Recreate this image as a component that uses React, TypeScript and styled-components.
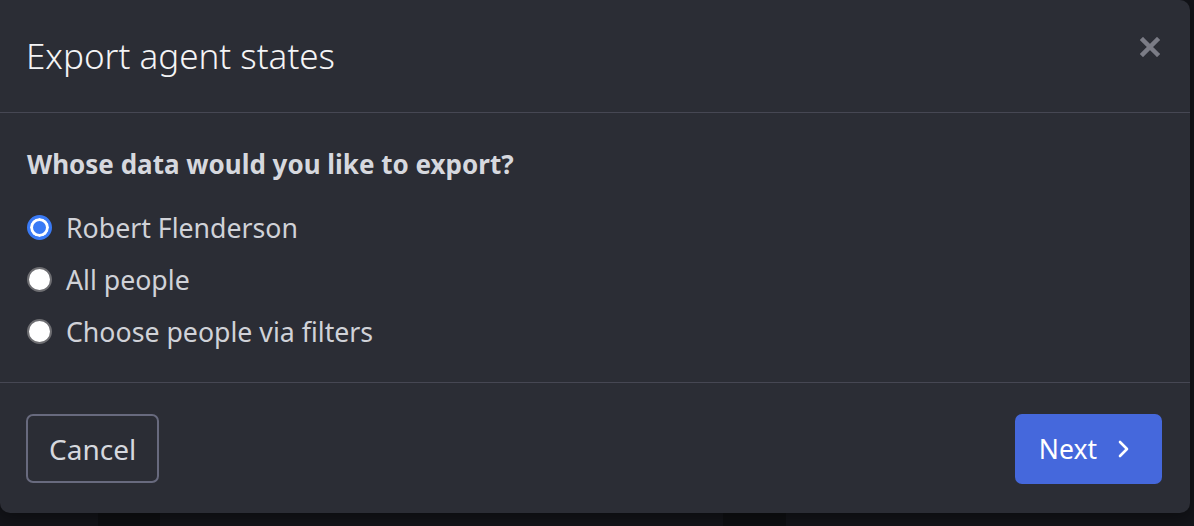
import React, { useState } from "react";
import styled, { createGlobalStyle } from "styled-components";

const GlobalStyle = createGlobalStyle`
  html, body {
    margin: 0;
    padding: 0;
    background: #131419;
    font-family: "Noto Sans", "Liberation Sans", sans-serif;
  }
  * {
    box-sizing: border-box;
  }
`;

const Page = styled.div`
  position: relative;
  width: 1194px;
  height: 526px;
  overflow: hidden;
  background: #131419;
  display: flex;
`;

const PageColumn = styled.div<{ $width: number; $dark?: boolean }>`
  width: ${(p) => p.$width}px;
  flex-shrink: 0;
  height: 100%;
  background: ${(p) => (p.$dark ? "#0e0f12" : "#131419")};
`;

const Modal = styled.div`
  position: absolute;
  top: 0;
  left: 0;
  width: 1190px;
  height: 513px;
  background: #2b2d35;
  border-radius: 0 10px 10px 10px;
  display: flex;
  flex-direction: column;
  box-shadow: 0 4px 16px rgba(0, 0, 0, 0.4);
`;

const Header = styled.div`
  height: 113px;
  display: flex;
  align-items: center;
  justify-content: space-between;
  padding: 0 30px 0 26px;
  border-bottom: 1px solid #464753;
`;

const Title = styled.h2`
  margin: 0 0 2px;
  font-size: 35px;
  font-weight: 300;
  color: #f4f4f6;
`;

const CloseButton = styled.button`
  align-self: flex-start;
  margin-top: 37px;
  width: 20px;
  height: 20px;
  padding: 0;
  border: none;
  background: none;
  cursor: pointer;
  display: flex;
`;

const Body = styled.div`
  padding: 33px 27px 25px;
  border-bottom: 1px solid #464753;
`;

const Question = styled.div`
  font-size: 26px;
  line-height: 36px;
  font-weight: 700;
  color: #d6d8de;
  margin-bottom: 19px;
`;

const RadioRow = styled.label`
  height: 52px;
  display: flex;
  align-items: center;
  gap: 14px;
  cursor: pointer;
`;

const RadioDot = styled.span<{ $checked: boolean }>`
  width: 25px;
  height: 25px;
  border-radius: 50%;
  flex-shrink: 0;
  background: ${(p) => (p.$checked ? "#3a7af5" : "#ffffff")};
  border: ${(p) => (p.$checked ? "3px solid #3a7af5" : "2px solid #6e6e72")};
  box-shadow: ${(p) => (p.$checked ? "inset 0 0 0 3px #ffffff" : "none")};
`;

const RadioLabel = styled.span`
  font-size: 26.7px;
  color: #d0d2d8;
`;

const Footer = styled.div`
  flex: 1;
  display: flex;
  justify-content: space-between;
  align-items: flex-start;
  padding: 31px 28px 0 26px;
`;

const CancelButton = styled.button`
  height: 69px;
  padding: 0 21px;
  border: 2px solid #686a7e;
  border-radius: 7px;
  background: transparent;
  color: #d6d8de;
  font-family: inherit;
  font-size: 28px;
  cursor: pointer;
`;

const NextButton = styled.button`
  height: 70px;
  padding: 0 32px 0 24px;
  display: flex;
  align-items: center;
  gap: 21px;
  border: none;
  border-radius: 7px;
  background: #4568dc;
  color: #ffffff;
  font-family: inherit;
  font-size: 26.5px;
  cursor: pointer;
`;

const options = ["Robert Flenderson", "All people", "Choose people via filters"];

const App = () => {
  const [selected, setSelected] = useState(0);

  return (
    <Page>
      <GlobalStyle />
      <PageColumn $width={98} />
      <PageColumn $width={62} $dark />
      <PageColumn $width={563} />
      <PageColumn $width={63} $dark />
      <Modal>
        <Header>
          <Title>Export agent states</Title>
          <CloseButton aria-label="Close">
            <svg width="20" height="20" viewBox="0 0 20 20">
              <path d="M3 3 L17 17 M17 3 L3 17" stroke="#7b7c86" strokeWidth="4.5" strokeLinecap="square" />
            </svg>
          </CloseButton>
        </Header>
        <Body>
          <Question>Whose data would you like to export?</Question>
          {options.map((opt, i) => (
            <RadioRow key={opt} onClick={() => setSelected(i)}>
              <RadioDot $checked={selected === i} />
              <RadioLabel>{opt}</RadioLabel>
            </RadioRow>
          ))}
        </Body>
        <Footer>
          <CancelButton>Cancel</CancelButton>
          <NextButton>
            Next
            <svg width="12" height="18" viewBox="0 0 12 18">
              <polyline points="2,2 9,9 2,16" fill="none" stroke="#ffffff" strokeWidth="2.6" strokeLinecap="round" strokeLinejoin="round" />
            </svg>
          </NextButton>
        </Footer>
      </Modal>
    </Page>
  );
};

export default App;
